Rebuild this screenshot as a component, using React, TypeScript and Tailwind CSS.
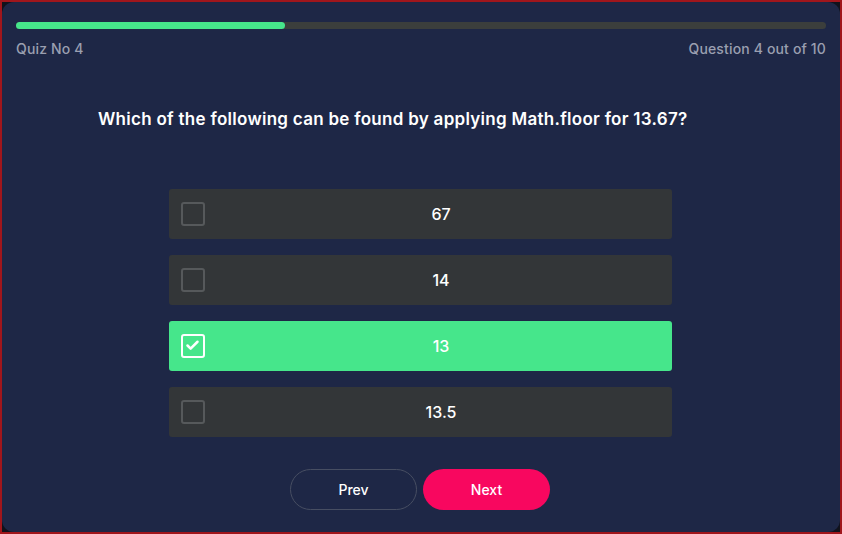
import { Check } from "lucide-react";

const options = ["67", "14", "13", "13.5"];
const selected = 2;

export default function App() {
  return (
    <div
      className="w-[842px] h-[534px] bg-[#10121c] border-2 border-[#a0161c]"
      style={{ fontFamily: "Inter, 'Noto Sans', sans-serif" }}
    >
      <div className="h-full w-full rounded-xl bg-[#1e2746] px-[14px] pt-[20px] flex flex-col">
        {/* progress */}
        <div className="h-[7px] w-full rounded-full bg-[#3b3e3c] pr-[1px]">
          <div className="h-full w-[33.3%] rounded-full bg-[#46e58b]" />
        </div>
        <div className="flex justify-between mt-[9px] text-[14px] font-medium text-[#9a9fb0] tracking-[0.15px]">
          <span>Quiz No 4</span>
          <span>Question 4 out of 10</span>
        </div>

        <h1 className="mt-[48px] pl-[82px] text-[17px] font-semibold text-white tracking-[0.28px]">
          Which of the following can be found by applying Math.floor for 13.67?
        </h1>

        <div className="mt-[56px] flex flex-col gap-4 items-center pr-[2px]">
          {options.map((opt, i) => (
            <div
              key={opt}
              className={`w-[503px] h-[50px] rounded-[3px] flex items-center px-3 ${
                i === selected ? "bg-[#46e68b]" : "bg-[#333638]"
              }`}
            >
              <div
                className={`w-6 h-6 rounded-[3px] border-2 flex items-center justify-center ${
                  i === selected ? "border-white" : "border-[#56595b]"
                }`}
              >
                {i === selected && <Check size={15} strokeWidth={4} color="white" />}
              </div>
              <span className="flex-1 text-center pl-[18px] text-[16px] font-medium text-white">
                {opt}
              </span>
            </div>
          ))}
        </div>

        <div className="mt-[32px] flex justify-center gap-[6px] pr-[2px]">
          <button className="w-[127px] h-[41px] rounded-full border border-[#474e62] text-[14px] font-medium text-white">
            Prev
          </button>
          <button className="w-[127px] h-[41px] rounded-full bg-[#f8075f] text-[14px] font-medium text-white">
            Next
          </button>
        </div>
      </div>
    </div>
  );
}
